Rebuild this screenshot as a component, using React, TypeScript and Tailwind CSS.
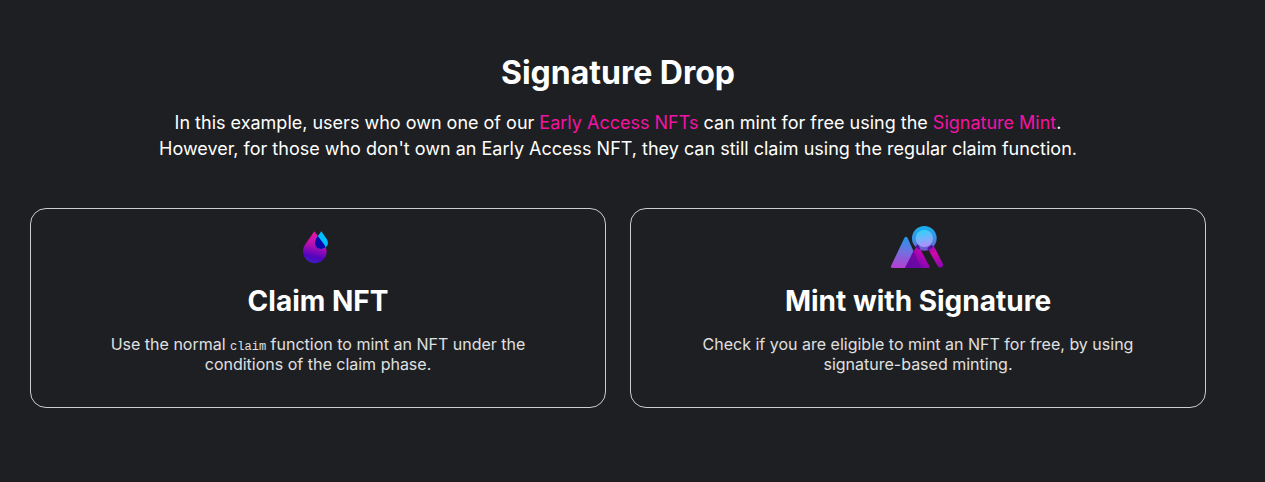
import type { ReactNode } from "react";

function DropIcon() {
  return (
    <svg viewBox="18 15 132 132" className="h-11 w-11" aria-hidden="true">
      <defs>
        <linearGradient id="drop-body" x1="85" y1="35" x2="62" y2="128" gradientUnits="userSpaceOnUse">
          <stop offset="0" stopColor="#f213a4" />
          <stop offset="0.4" stopColor="#c010b0" />
          <stop offset="0.8" stopColor="#5204bf" />
          <stop offset="1" stopColor="#3f1fc0" />
        </linearGradient>
        <clipPath id="drop-clip">
          <path d="M73 34 L103 74 C107 80 110 87 110 94 A35.5 35.5 0 0 1 39 94 C39 87 41 80 46 73 Z" />
        </clipPath>
      </defs>
      <path
        d="M73 34 L103 74 C107 80 110 87 110 94 A35.5 35.5 0 0 1 39 94 C39 87 41 80 46 73 Z"
        fill="url(#drop-body)"
      />
      <path d="M94 34 L110 57 C118 69 113 84 94 87 C75 86 70 69 79 55 Z" fill="#00bdff" />
      <path
        d="M94 34 L110 57 C118 69 113 84 94 87 C75 86 70 69 79 55 Z"
        fill="#0a08a8"
        clipPath="url(#drop-clip)"
      />
    </svg>
  );
}

function SignatureIcon() {
  return (
    <svg viewBox="30 30 168 132" className="h-11 w-14" aria-hidden="true">
      <defs>
        <linearGradient id="peak" x1="78" y1="66" x2="70" y2="160" gradientUnits="userSpaceOnUse">
          <stop offset="0" stopColor="#1f95ea" />
          <stop offset="0.45" stopColor="#6f72df" />
          <stop offset="1" stopColor="#b33fd0" />
        </linearGradient>
        <linearGradient id="peak-front" x1="132" y1="100" x2="90" y2="160" gradientUnits="userSpaceOnUse">
          <stop offset="0" stopColor="#d205b0" />
          <stop offset="1" stopColor="#5a08b4" />
        </linearGradient>
        <linearGradient id="handle" x1="150" y1="92" x2="184" y2="156" gradientUnits="userSpaceOnUse">
          <stop offset="0" stopColor="#8a0aa0" />
          <stop offset="0.35" stopColor="#d208ad" />
          <stop offset="1" stopColor="#8a08b0" />
        </linearGradient>
        <linearGradient id="rim" x1="130" y1="33" x2="136" y2="107" gradientUnits="userSpaceOnUse">
          <stop offset="0" stopColor="#16b0ec" />
          <stop offset="0.55" stopColor="#3d8fe2" />
          <stop offset="1" stopColor="#7a4fd0" />
        </linearGradient>
        <linearGradient id="lens" x1="128" y1="44" x2="138" y2="96" gradientUnits="userSpaceOnUse">
          <stop offset="0" stopColor="#2fd2fb" />
          <stop offset="0.5" stopColor="#72b4fb" />
          <stop offset="1" stopColor="#b58bfa" />
        </linearGradient>
      </defs>
      <path d="M73 69 Q78 62 83 69 L123 159 H37 Q31 158 34 151 Z" fill="url(#peak)" />
      <path d="M107 98 Q113 92 119 99 L148 153 Q151 159 145 159 H75 Z" fill="url(#peak-front)" />
      <path d="M101 106 L123 159 H75 Z" fill="#650a9f" opacity="0.75" />
      <path d="M142 99 L155 89 Q160 91 163 96 L189 147 Q191 154 184 157 Q177 159 173 153 Z" fill="url(#handle)" />
      <circle cx="133" cy="70" r="37" fill="url(#rim)" />
      <path
        d="M106 96 L113 88 Q118 92 122 105 Q112 102 106 96 Z M142 99 L155 89 L160 95 Q153 102 144 105 Z"
        fill="#5510a0"
      />
      <circle cx="133" cy="70" r="26" fill="url(#lens)" />
    </svg>
  );
}

function OptionCard({ icon, title, children }: { icon: ReactNode; title: string; children: ReactNode }) {
  return (
    <button
      type="button"
      className="flex cursor-pointer flex-col items-center rounded-2xl border border-[#cccccc] px-4 pt-4 pb-[33px] text-center"
    >
      {icon}
      <h2 className="mt-3.5 text-[28px] leading-9 font-bold text-white">{title}</h2>
      <p className="mt-[15px] max-w-[460px] text-base leading-5 text-[#e0e0e0]">{children}</p>
    </button>
  );
}

export default function App() {
  return (
    <main className="min-h-screen bg-[#1e1f22] pt-[53px] pr-[59px] pb-10 pl-[30px] font-['Inter',sans-serif] text-white">
      <header className="text-center">
        <h1 className="text-[32px] leading-10 font-bold">Signature Drop</h1>
        <p className="mt-[17px] text-lg leading-[26px]">
          In this example, users who own one of our{" "}
          <a href="#early-access" className="text-[#f213a4]">
            Early Access NFTs
          </a>{" "}
          can mint for free using the{" "}
          <a href="#signature-mint" className="text-[#f213a4]">
            Signature Mint
          </a>
          .
          <br />
          However, for those who don't own an Early Access NFT, they can still claim using the regular claim function.
        </p>
      </header>
      <div className="mt-[46px] grid grid-cols-2 gap-6">
        <OptionCard icon={<DropIcon />} title="Claim NFT">
          Use the normal <code className="font-['Liberation_Mono',monospace] text-xs leading-none">claim</code> function
          to mint an NFT under the conditions of the claim phase.
        </OptionCard>
        <OptionCard icon={<SignatureIcon />} title="Mint with Signature">
          Check if you are eligible to mint an NFT for free, by using signature-based minting.
        </OptionCard>
      </div>
    </main>
  );
}
